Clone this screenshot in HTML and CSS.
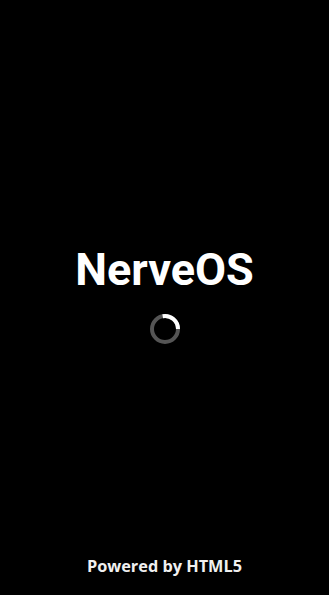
FILE: index.html
```html
<!DOCTYPE html>
<html lang="en">
<head>
<meta charset="utf-8">
<title>NerveOS</title>
<link rel="stylesheet" href="styles.css">
</head>
<body>
<div class="screen">
  <main class="splash">
    <h1 class="title">NerveOS</h1>
    <svg class="spinner" width="34" height="34" viewBox="0 0 34 34" aria-hidden="true">
      <circle cx="17" cy="17" r="13" fill="none" stroke="#555555" stroke-width="4"/>
      <path d="M14.7 4.2 A13 13 0 0 1 30 17" fill="none" stroke="#ffffff" stroke-width="4"/>
    </svg>
  </main>
  <footer class="footer">Powered by HTML5</footer>
</div>
</body>
</html>
```
FILE: styles.css
```css
html, body {
  margin: 0;
  padding: 0;
  height: 100%;
  background: #000;
}
.screen {
  height: 100%;
  display: flex;
  flex-direction: column;
  font-family: Roboto, "Liberation Sans", sans-serif;
  color: #fff;
}
.splash {
  flex: 1;
  display: flex;
  flex-direction: column;
  align-items: center;
  justify-content: center;
  gap: 20px;
  padding-top: 36px;
}
.title {
  margin: 0;
  font-size: 45px;
  font-weight: 700;
  line-height: 1;
  letter-spacing: 0;
}
.spinner {
  display: block;
}
.footer {
  text-align: center;
  font-family: "Open Sans", Roboto, sans-serif;
  font-size: 16.3px;
  font-weight: 700;
  color: #f0f0f0;
  line-height: 20px;
  padding-bottom: 19px;
}
```
